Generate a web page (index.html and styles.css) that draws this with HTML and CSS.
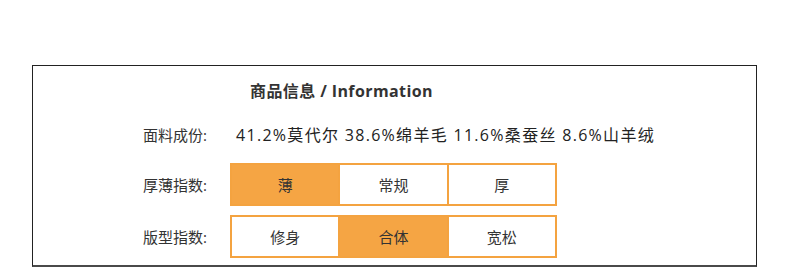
FILE: index.html
```html
<!DOCTYPE html>
<html lang="zh-CN">
<head>
<meta charset="utf-8">
<title>商品信息</title>
<link rel="stylesheet" href="styles.css">
</head>
<body>
<section class="info">
  <h2 class="info-title">商品信息 / Information</h2>
  <div class="info-rows">
    <div class="info-label row-text">面料成份:</div>
    <div class="info-value row-text">41.2%莫代尔 38.6%绵羊毛 11.6%桑蚕丝 8.6%山羊绒</div>

    <div class="info-label">厚薄指数:</div>
    <div class="scale">
      <div class="scale-cell is-active">薄</div>
      <div class="scale-cell">常规</div>
      <div class="scale-cell">厚</div>
    </div>

    <div class="info-label">版型指数:</div>
    <div class="scale">
      <div class="scale-cell">修身</div>
      <div class="scale-cell is-active">合体</div>
      <div class="scale-cell">宽松</div>
    </div>
  </div>
</section>
</body>
</html>
```

FILE: styles.css
```css
* {
  box-sizing: border-box;
}

html, body {
  margin: 0;
  background: #fff;
}

body {
  padding: 65px 0 0 32px;
  font-family: "Open Sans", "Noto Sans CJK SC", sans-serif;
  color: #333;
}

.info {
  width: 725px;
  height: 202px;
  border: 1px solid #222;
  border-bottom: 2px solid #4a4a4a;
  padding: 13px 0 0 110px;
}

.info-title {
  margin: 0 0 0 107px;
  font-size: 16px;
  line-height: 24px;
  font-weight: 700;
  letter-spacing: 0.4px;
  color: #333;
}

.info-rows {
  display: grid;
  grid-template-columns: 87px auto;
  grid-template-rows: 31px 43px 43px;
  row-gap: 9px;
  margin-top: 20px;
  align-items: center;
}

.row-text {
  padding-bottom: 7px;
}

.info-label {
  font-size: 15px;
  line-height: 24px;
  color: #333;
}

.info-value {
  font-size: 16px;
  line-height: 24px;
  letter-spacing: 1.3px;
  padding-left: 6px;
  color: #222;
}

.scale {
  display: grid;
  grid-template-columns: repeat(3, 1fr);
  column-gap: 2px;
  width: 327px;
  height: 43px;
  border: 2px solid #f4a340;
  background: #f4a340;
}

.scale-cell {
  display: flex;
  align-items: center;
  justify-content: center;
  background: #fff;
  font-size: 15px;
  color: #333;
}

.scale-cell.is-active {
  background: #f5a544;
}
```
